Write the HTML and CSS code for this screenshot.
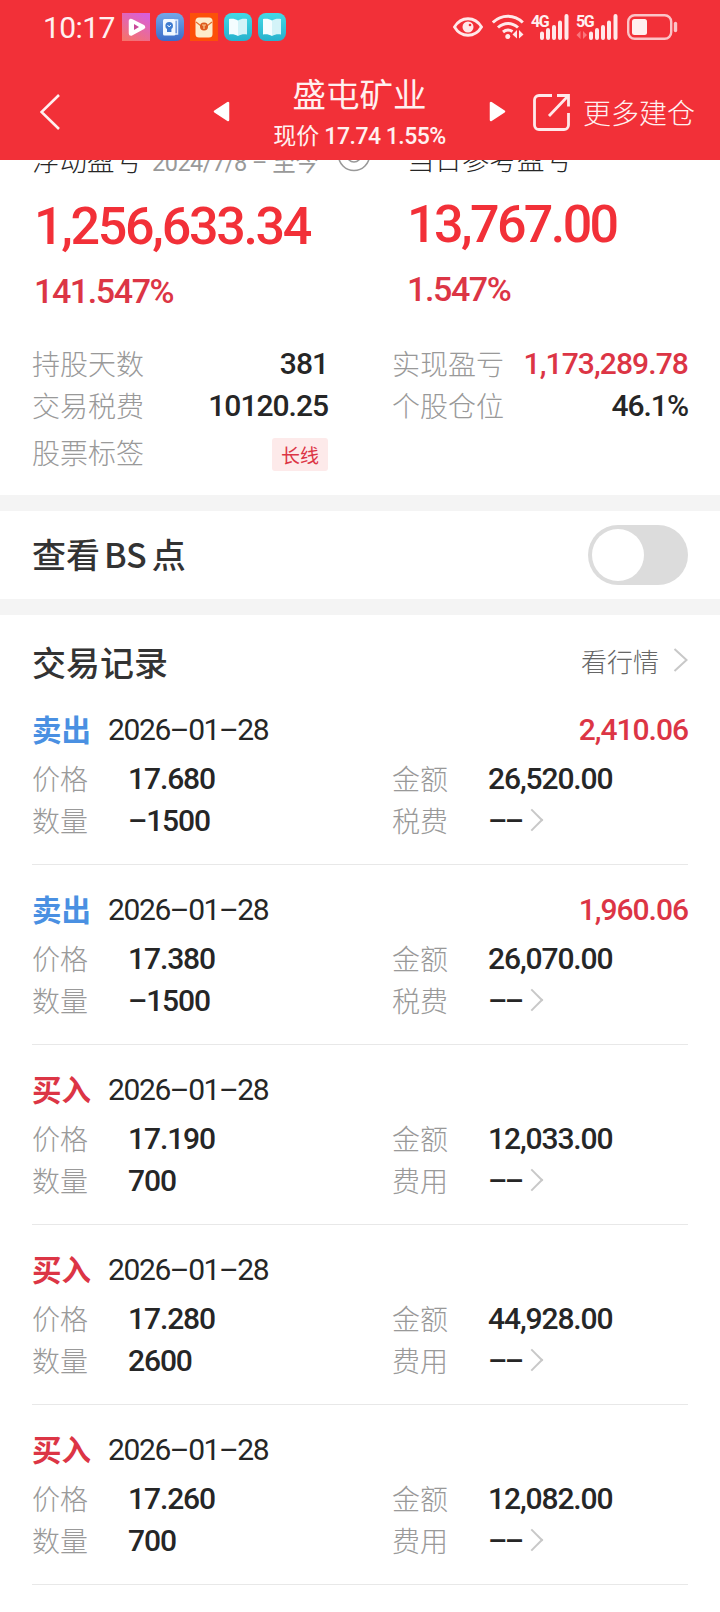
FILE: index.html
```html
<!DOCTYPE html>
<html lang="zh-CN">
<head>
    <meta charset="UTF-8">
    <meta name="viewport" content="width=device-width, initial-scale=1.0">
    <title>盛屯矿业</title>
    <link rel="stylesheet" href="styles.css">
</head>
<body>
    <header class="header">
        <!-- Status bar -->
        <div class="status-bar">
            <span class="clock">10:17</span>
            <div class="app-icons">
                <svg width="28" height="28" viewBox="0 0 28 28">
                    <defs>
                        <linearGradient id="pink" x1="0.7" y1="0" x2="0.2" y2="1">
                            <stop offset="0" stop-color="#d95fd8"/>
                            <stop offset="1" stop-color="#f5736c"/>
                        </linearGradient>
                    </defs>
                    <rect width="28" height="28" fill="url(#pink)"/>
                    <path d="M9 8v12.500l12-6.500z" fill="#fff" stroke="#fff" stroke-width="4.500" stroke-linejoin="round"/>
                    <path d="M12 11v6l5-3z" fill="#c8489a"/>
                </svg>
                <svg width="28" height="28" viewBox="0 0 28 28">
                    <defs>
                        <linearGradient id="blue" x1="0" y1="0" x2="0" y2="1">
                            <stop offset="0" stop-color="#74a7e8"/>
                            <stop offset="1" stop-color="#3b6cc9"/>
                        </linearGradient>
                    </defs>
                    <rect width="28" height="28" rx="8" fill="url(#blue)"/>
                    <path d="M19 7h2.500v14H19" fill="none" stroke="#dfeafc" stroke-width="1.500"/>
                    <rect x="7" y="6" width="12.500" height="16.500" rx="1.500" fill="#f2f8ff"/>
                    <circle cx="13.200" cy="12.700" r="3.800" fill="#3f7bd0"/>
                    <path d="M11 16h4.400v3H11z" fill="#3f7bd0"/>
                    <path d="M11.500 12l1.700 2 1.700-2" fill="none" stroke="#f2f8ff"/>
                </svg>
                <svg width="28" height="28" viewBox="0 0 28 28">
                    <rect width="28" height="28" fill="#fc5009"/>
                    <rect x="5.500" y="4.500" width="17" height="20" rx="3.500" fill="#fdeccb"/>
                    <path d="M6 9l5 4h6l5-4" fill="none" stroke="#e3702c" stroke-width="1.200"/>
                    <circle cx="14" cy="13.500" r="4" fill="#dd5a1c"/>
                    <path d="M12 12h4M14 12v4" stroke="#fbc98c" stroke-width="1.200"/>
                </svg>
                <svg width="28" height="28" viewBox="0 0 28 28">
                    <defs>
                        <linearGradient id="cyan" x1="0" y1="0" x2="0" y2="1">
                            <stop offset="0" stop-color="#42d9e6"/>
                            <stop offset="1" stop-color="#27b1cd"/>
                        </linearGradient>
                    </defs>
                    <rect width="28" height="28" rx="8" fill="url(#cyan)"/>
                    <path d="M14 7.500C11 5.500 8 5.300 5 6v15.500c3-.6 6-.3 9 1.500z" fill="#f4fdff"/>
                    <path d="M14 7.500c3-2 6-2.200 9-1.500v15.500c-3-.6-6-.3-9 1.500z" fill="#d3f3f8"/>
                </svg>
                <svg width="28" height="28" viewBox="0 0 28 28">
                    <rect width="28" height="28" rx="8" fill="url(#cyan)"/>
                    <path d="M14 7.500C11 5.500 8 5.300 5 6v15.500c3-.6 6-.3 9 1.500z" fill="#f4fdff"/>
                    <path d="M14 7.500c3-2 6-2.200 9-1.500v15.500c-3-.6-6-.3-9 1.500z" fill="#d3f3f8"/>
                </svg>
            </div>
            <div class="system-icons">
                <svg class="eye" width="30" height="20" viewBox="0 0 30 20">
                    <path d="M1.500 10C8-1 22-1 28.500 10 22 21 8 21 1.500 10z" fill="none" stroke="#ffe9ea" stroke-width="2.800"/>
                    <circle cx="15" cy="10" r="5.500" fill="#ffe9ea"/>
                    <circle cx="17" cy="8" r="1.300" fill="#f23038"/>
                </svg>
                <svg class="wifi" width="32" height="26" viewBox="0 0 32 26">
                    <g fill="none" stroke="#ffe9ea" stroke-width="3">
                        <path d="M.8 8.500c8.500-8.500 21.500-8.500 30 0"/>
                        <path d="M6 13.500c6-5.500 14-5.500 20 0"/>
                        <path d="M11 18c3-2.500 6.500-2.500 9.500-.5"/>
                    </g>
                    <circle cx="15.800" cy="22.500" r="2.500" fill="#ffe9ea"/>
                    <path d="M25 16v8.500l-4.500-4zM27 16v8.500l4.500-4z" fill="#ffe9ea"/>
                </svg>
                <div class="signal">
                    <span class="net">4G</span>
                    <svg width="38" height="26" viewBox="0 0 38 26">
                        <path d="M11 19.500V24M17 16V24M23 13V24M29 8.500V24M35.500 2V24" stroke="#ffe9ea" stroke-width="4" stroke-linecap="round"/>
                    </svg>
                </div>
                <div class="signal">
                    <span class="net">5G</span>
                    <svg width="42" height="26" viewBox="0 0 42 26">
                        <path d="M4.500 17v8l-4-4zM7 17v8l4-4z" fill="#f9777d"/>
                        <path d="M15 19.500V24M21 16V24M27 13V24M33 8.500V24M39.500 2V24" stroke="#ffe9ea" stroke-width="4" stroke-linecap="round"/>
                    </svg>
                </div>
                <svg class="battery" width="52" height="26" viewBox="0 0 52 26">
                    <rect x="1.200" y="1.200" width="43" height="23.600" rx="6.500" fill="none" stroke="#fbc4c7" stroke-width="2.400"/>
                    <rect x="5" y="5" width="15" height="16" rx="2.500" fill="#fff0f0"/>
                    <path d="M48.500 9.500v7" stroke="#fbc4c7" stroke-width="3.400" stroke-linecap="round"/>
                </svg>
            </div>
        </div>

        <!-- Stock switcher -->
        <nav class="nav">
            <svg class="back" width="20" height="36" viewBox="0 0 20 36">
                <path d="M19 1L1.500 18 19 35" fill="none" stroke="#fff0f0" stroke-width="2.600"/>
            </svg>
            <svg class="prev" width="17" height="21" viewBox="0 0 17 21">
                <path d="M15 2v17L2 10.500z" fill="#fff" stroke="#fff" stroke-width="2.500" stroke-linejoin="round"/>
            </svg>
            <div class="stock">
                <h1>盛屯矿业</h1>
                <p>现价 <b>17.74 1.55%</b></p>
            </div>
            <svg class="next" width="17" height="21" viewBox="0 0 17 21">
                <path d="M2 2v17l13-8.500z" fill="#fff" stroke="#fff" stroke-width="2.500" stroke-linejoin="round"/>
            </svg>
            <svg class="share" width="38" height="37" viewBox="0 0 38 37">
                <path d="M19 1.500H6A4.500 4.500 0 0 0 1.500 6v25A4.500 4.500 0 0 0 6 35.500h25a4.500 4.500 0 0 0 4.500-4.500V19" fill="none" stroke="#ffe9ea" stroke-width="2.800"/>
                <path d="M24 1.500h11.500v11M35 2L16 22" fill="none" stroke="#ffe9ea" stroke-width="2.800"/>
            </svg>
            <span class="more">更多建仓</span>
        </nav>
    </header>

    <main>
        <!-- Profit summary -->
        <section class="summary">
            <div class="profit">
                <div class="profit-left">
                    <div class="profit-label">
                        浮动盈亏 <small>2024/7/8 – 至今</small>
                        <svg width="34" height="34" viewBox="0 0 34 34">
                            <circle cx="17" cy="17" r="15.500" fill="none" stroke="#999" stroke-width="1.600"/>
                            <circle cx="17" cy="17" r="7" fill="none" stroke="#999" stroke-width="1.600"/>
                        </svg>
                    </div>
                    <div class="amount">1,256,633.34</div>
                    <div class="percent">141.547%</div>
                </div>
                <div class="profit-right">
                    <div class="profit-label">当日参考盈亏</div>
                    <div class="amount">13,767.00</div>
                    <div class="percent">1.547%</div>
                </div>
            </div>
            <div class="facts">
                <div class="fact"><span>持股天数</span><b>381</b></div>
                <div class="fact"><span>实现盈亏</span><b class="red">1,173,289.78</b></div>
                <div class="fact"><span>交易税费</span><b>10120.25</b></div>
                <div class="fact"><span>个股仓位</span><b>46.1%</b></div>
                <div class="fact tags"><span>股票标签</span><em class="tag">长线</em></div>
            </div>
        </section>

        <!-- BS switch -->
        <section class="bs">
            <h2>查看<span>BS</span>点</h2>
            <div class="switch"></div>
        </section>

        <!-- Trade records -->
        <section class="records">
            <div class="records-head">
                <h2>交易记录</h2>
                <a>看行情
                    <svg width="15" height="24" viewBox="0 0 15 24"><path d="M1.500 1l12 11-12 11" fill="none" stroke="#c8c8c8" stroke-width="2"/></svg>
                </a>
            </div>

            <article class="record">
                <div class="record-title"><strong class="sell">卖出</strong><time>2026–01–28</time><b>2,410.06</b></div>
                <div class="record-row"><span>价格</span><b>17.680</b><span>金额</span><b>26,520.00</b></div>
                <div class="record-row"><span>数量</span><b>–1500</b><span>税费</span><b class="empty">––<i class="arrow"></i></b></div>
            </article>

            <article class="record">
                <div class="record-title"><strong class="sell">卖出</strong><time>2026–01–28</time><b>1,960.06</b></div>
                <div class="record-row"><span>价格</span><b>17.380</b><span>金额</span><b>26,070.00</b></div>
                <div class="record-row"><span>数量</span><b>–1500</b><span>税费</span><b class="empty">––<i class="arrow"></i></b></div>
            </article>

            <article class="record">
                <div class="record-title"><strong class="buy">买入</strong><time>2026–01–28</time></div>
                <div class="record-row"><span>价格</span><b>17.190</b><span>金额</span><b>12,033.00</b></div>
                <div class="record-row"><span>数量</span><b>700</b><span>费用</span><b class="empty">––<i class="arrow"></i></b></div>
            </article>

            <article class="record">
                <div class="record-title"><strong class="buy">买入</strong><time>2026–01–28</time></div>
                <div class="record-row"><span>价格</span><b>17.280</b><span>金额</span><b>44,928.00</b></div>
                <div class="record-row"><span>数量</span><b>2600</b><span>费用</span><b class="empty">––<i class="arrow"></i></b></div>
            </article>

            <article class="record">
                <div class="record-title"><strong class="buy">买入</strong><time>2026–01–28</time></div>
                <div class="record-row"><span>价格</span><b>17.260</b><span>金额</span><b>12,082.00</b></div>
                <div class="record-row"><span>数量</span><b>700</b><span>费用</span><b class="empty">––<i class="arrow"></i></b></div>
            </article>
        </section>
    </main>
</body>
</html>
```
FILE: styles.css
```css
:root {
    --red: #f23038;
    --text-red: #dc3545;
    --dark: #262626;
    --gray: #999;
    --cjk: "Noto Sans CJK SC", sans-serif;
    --num: Roboto, "Noto Sans CJK SC", sans-serif;
}

* {
    box-sizing: border-box;
}

body {
    margin: 0;
    width: 720px;
    height: 1612px;
    overflow: hidden;
    background: #fff;
    color: var(--dark);
    font-family: var(--cjk);
}

h1, h2, p {
    margin: 0;
}

b, time {
    font-family: var(--num);
    font-weight: 500;
}

svg {
    display: block;
    flex: none;
}

/* Header */
.header {
    position: relative;
    z-index: 1;
    height: 160px;
    background: var(--red);
    color: #fff0f0;
}

.status-bar {
    display: flex;
    align-items: center;
    height: 54px;
    padding: 0 41px 0 43px;
}

.clock {
    width: 79px;
    font: 400 30px var(--num);
    letter-spacing: -0.6px;
}

.app-icons {
    display: flex;
    gap: 6px;
}

.system-icons {
    display: flex;
    align-items: center;
    margin-left: auto;
}

.wifi {
    margin-left: 9px;
}

.signal {
    position: relative;
    margin-left: 7px;
}

.net {
    position: absolute;
    left: 0;
    top: 0;
    font: 700 16px/15px var(--num);
    letter-spacing: -1.5px;
}

.battery {
    margin-left: 9px;
}

.nav {
    display: flex;
    height: 106px;
    padding: 0 24px 0 40px;
}

.back {
    margin-top: 40px;
}

.prev, .next {
    margin-top: 47px;
}

.prev {
    margin-left: 153px;
}

.stock {
    width: 259px;
    text-align: center;
}

.stock h1 {
    margin-top: 16px;
    font-size: 33.5px;
    font-weight: 400;
    line-height: 46px;
}

.stock p {
    font-size: 23px;
    line-height: 36px;
    white-space: nowrap;
}

.stock b {
    letter-spacing: -0.5px;
}

.share {
    margin: 40px 0 0 27px;
}

.more {
    margin: 38px 0 0 12px;
    font-size: 28px;
    font-weight: 300;
    line-height: 40px;
    white-space: nowrap;
}

/* Summary, its first line is scrolled under the header */
main {
    margin-top: -20px;
}

.summary {
    height: 355px;
    padding: 0 32px;
}

.profit {
    display: flex;
}

.profit-left {
    width: 375px;
}

.profit-label {
    display: flex;
    align-items: center;
    height: 42px;
    margin-top: -2px;
    font-size: 27.5px;
    font-weight: 300;
    white-space: nowrap;
}

.profit-label small {
    margin: 4px 0 0 10px;
    color: var(--gray);
    font: 400 23.5px var(--num);
    letter-spacing: -0.5px;
}

.profit-label svg {
    margin: -9px 0 0 19px;
}

.profit-right .profit-label {
    margin-top: -3px;
}

.amount {
    height: 64px;
    margin: 15px 0 0 2px;
    color: var(--red);
    font: 500 52px/64px var(--num);
    letter-spacing: -2.3px;
}

.percent {
    margin: 7px 0 0 2px;
    color: var(--text-red);
    font: 500 34px/50px var(--num);
    letter-spacing: -1.4px;
}

.profit-right .amount,
.profit-right .percent {
    margin-left: 0;
}

.profit-right .amount {
    margin-top: 14px;
    letter-spacing: -2.6px;
}

.facts {
    display: grid;
    grid-template-columns: 296px 296px;
    column-gap: 64px;
    margin-top: 26px;
}

.fact {
    display: flex;
    align-items: center;
    justify-content: space-between;
    height: 42px;
}

.fact span,
.record-row span {
    color: var(--gray);
    font-size: 28px;
    font-weight: 300;
}

.fact b {
    font-size: 30px;
    letter-spacing: -1px;
}

.fact .red {
    color: var(--text-red);
    letter-spacing: -0.9px;
}

.tags {
    height: 52px;
}

.tag {
    height: 33px;
    margin-top: 5px;
    padding: 0 9px;
    border-radius: 3px;
    background: #fdeaea;
    color: var(--text-red);
    font-size: 19px;
    font-style: normal;
    line-height: 33px;
}

/* Switch */
.bs {
    display: flex;
    align-items: center;
    justify-content: space-between;
    height: 120px;
    padding: 0 32px;
    border: solid #f4f4f4;
    border-width: 16px 0;
}

.bs h2,
.records h2 {
    padding-bottom: 3px;
    color: #333;
    font-size: 34px;
    font-weight: 500;
}

.records h2 {
    padding-bottom: 0;
}

.bs h2 span {
    margin: 0 5px 0 4px;
}

.switch {
    width: 100px;
    height: 60px;
    padding: 4px;
    border-radius: 30px;
    background: #dcdcdc;
}

.switch::before {
    content: "";
    display: block;
    width: 52px;
    height: 52px;
    border-radius: 50%;
    background: #fff;
}

/* Records */
.records {
    padding: 0 32px;
}

.records-head {
    display: flex;
    align-items: center;
    justify-content: space-between;
    height: 70px;
    padding-top: 23px;
}

.records-head a {
    display: flex;
    align-items: center;
    gap: 14px;
    padding-bottom: 3px;
    color: #666;
    font-size: 26px;
    font-weight: 300;
}

.record {
    height: 180px;
    padding-top: 19px;
    border-bottom: 1px solid #e8e8e8;
}

.record-title {
    display: flex;
    align-items: center;
    height: 50px;
    margin-bottom: 3px;
    font-size: 30px;
}

.record-title strong {
    width: 76px;
    padding-bottom: 2px;
    font-size: 29.5px;
    font-weight: 700;
}

.record-title b {
    margin-left: auto;
    color: var(--text-red);
    letter-spacing: -1px;
}

.record-title time {
    font-weight: 400;
    letter-spacing: -1.4px;
}

.sell {
    color: #4a90e2;
}

.buy {
    color: var(--text-red);
}

.record-row {
    display: grid;
    grid-template-columns: 96px 264px 96px 1fr;
    align-items: center;
    height: 42px;
}

.record-row b {
    display: flex;
    align-items: center;
    font-size: 30px;
    letter-spacing: -1.1px;
}

.record-row .empty {
    letter-spacing: -2.5px;
}

.arrow {
    width: 16px;
    height: 16px;
    margin-left: 2px;
    border: solid #c8c8c8;
    border-width: 2px 2px 0 0;
    transform: rotate(45deg);
}
```
